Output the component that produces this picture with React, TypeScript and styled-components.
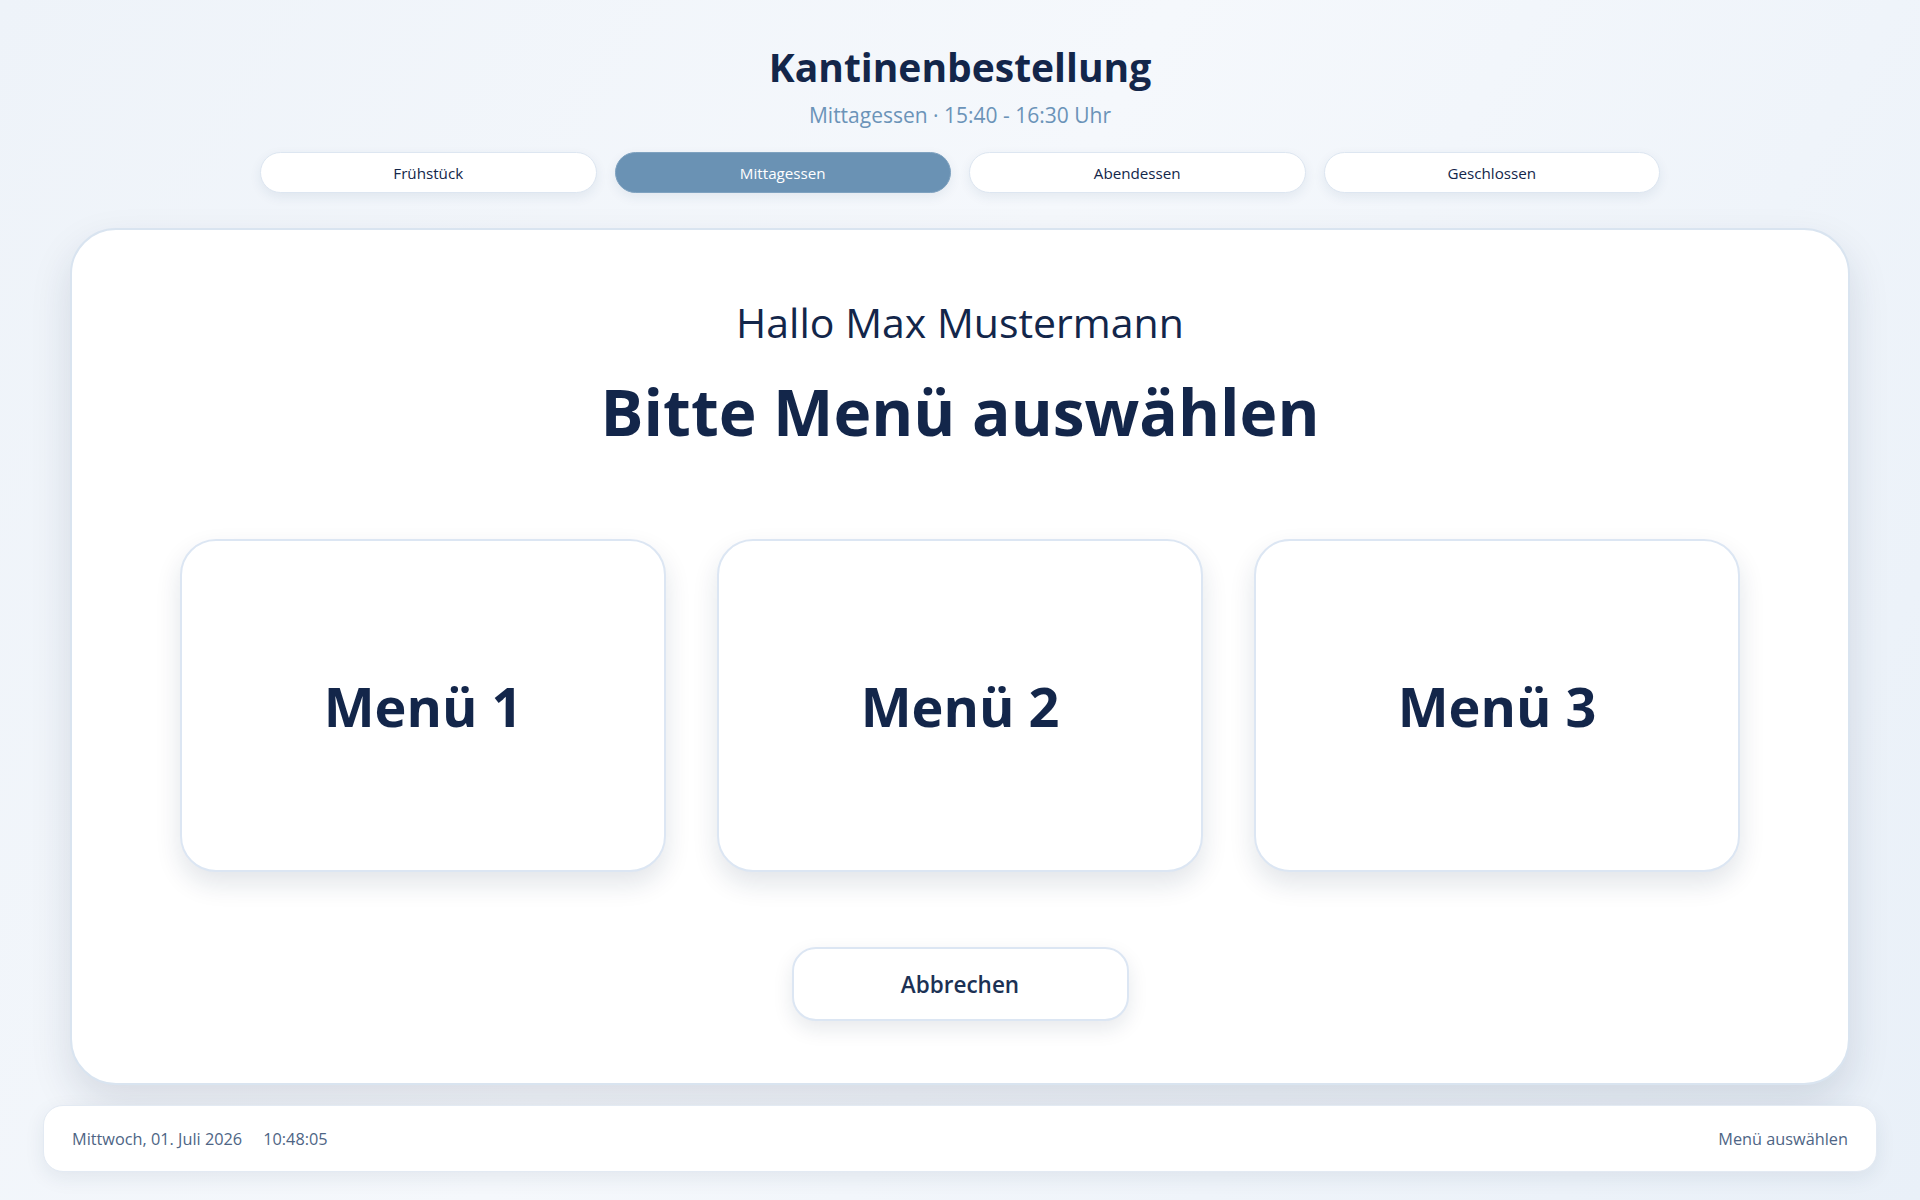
import React from 'react';
import styled, { createGlobalStyle } from 'styled-components';

const colors = {
  navy: '#13264a',
  muted: '#6b93b8',
  active: '#6a92b4',
  border: '#d9e4f0',
  footerText: '#4e6585',
};

const GlobalStyle = createGlobalStyle`
  html, body {
    margin: 0;
    padding: 0;
  }
  body {
    font-family: "Segoe UI", "Open Sans", "Noto Sans", sans-serif;
    color: ${colors.navy};
    background: linear-gradient(120deg, #eef3f9 0%, #f5f8fc 45%, #e9f0f8 100%);
    min-height: 100vh;
  }
  * {
    box-sizing: border-box;
  }
`;

const meals = ['Frühstück', 'Mittagessen', 'Abendessen', 'Geschlossen'];
const menus = ['Menü 1', 'Menü 2', 'Menü 3'];

export default function App() {
  return (
    <>
      <GlobalStyle />
      <Page>
        <Header>
          <Title>Kantinenbestellung</Title>
          <Subtitle>Mittagessen · 15:40 - 16:30 Uhr</Subtitle>
        </Header>
        <Tabs>
          {meals.map(m => (
            <Tab key={m} $active={m === 'Mittagessen'}>
              {m}
            </Tab>
          ))}
        </Tabs>
        <MainCard>
          <Greeting>Hallo Max Mustermann</Greeting>
          <Prompt>Bitte Menü auswählen</Prompt>
          <MenuGrid>
            {menus.map(m => (
              <MenuCard key={m}>{m}</MenuCard>
            ))}
          </MenuGrid>
          <CancelBtn>Abbrechen</CancelBtn>
        </MainCard>
        <Footer>
          <FooterLeft>
            <span>Mittwoch, 01. Juli 2026</span>
            <span>10:48:05</span>
          </FooterLeft>
          <FooterText>Menü auswählen</FooterText>
        </Footer>
      </Page>
    </>
  );
}

const Page = styled.div`
  display: flex;
  flex-direction: column;
  align-items: stretch;
  padding: 43px 43px 29px;
`;
const Header = styled.header`
  display: flex;
  flex-direction: column;
  align-items: center;
`;
const Title = styled.h1`
  margin: 0;
  font-size: 39px;
  line-height: 48px;
  font-weight: 700;
  color: ${colors.navy};
`;
const Subtitle = styled.div`
  margin-top: 11px;
  font-size: 21px;
  line-height: 27px;
  font-weight: 500;
  color: ${colors.muted};
`;
const Tabs = styled.nav`
  display: grid;
  grid-template-columns: repeat(4, 1fr);
  gap: 18px;
  width: 1400px;
  margin: 23px auto 0;
`;
const Tab = styled.button<{ $active?: boolean }>`
  height: 41px;
  border-radius: 999px;
  font-family: inherit;
  font-size: 15.2px;
  font-weight: 500;
  color: ${p => (p.$active ? '#ffffff' : colors.navy)};
  background: ${p => (p.$active ? colors.active : '#ffffff')};
  border: 1px solid ${p => (p.$active ? '#7fa2c0' : '#dde6f1')};
  box-shadow: 0 4px 12px rgba(30, 60, 100, 0.08);
  cursor: pointer;
`;
const MainCard = styled.main`
  display: flex;
  flex-direction: column;
  align-items: center;
  margin: 35px 27px 0;
  padding: 68px 40px 62px;
  background: #ffffff;
  border: 2px solid ${colors.border};
  border-radius: 46px;
  box-shadow: 0 18px 40px rgba(20, 40, 70, 0.13);
`;
const Greeting = styled.h2`
  margin: 0;
  font-size: 41px;
  line-height: 48px;
  font-weight: 400;
  color: ${colors.navy};
`;
const Prompt = styled.h1`
  margin: 24px 0 0;
  font-size: 64px;
  line-height: 84px;
  font-weight: 700;
  color: ${colors.navy};
`;
const MenuGrid = styled.div`
  display: grid;
  grid-template-columns: repeat(3, 1fr);
  gap: 51px;
  width: 100%;
  max-width: 1560px;
  margin-top: 85px;
`;
const MenuCard = styled.button`
  display: flex;
  align-items: center;
  justify-content: center;
  height: 333px;
  font-family: inherit;
  font-size: 54px;
  font-weight: 700;
  color: ${colors.navy};
  background: #ffffff;
  border: 2px solid #dce6f3;
  border-radius: 36px;
  box-shadow: 0 12px 26px rgba(20, 40, 70, 0.12);
  cursor: pointer;
`;
const CancelBtn = styled.button`
  width: 337px;
  height: 74px;
  margin-top: 75px;
  font-family: inherit;
  font-size: 22.5px;
  font-weight: 600;
  color: #1c3154;
  background: #ffffff;
  border: 2px solid #dce6f3;
  border-radius: 24px;
  box-shadow: 0 8px 20px rgba(20, 40, 70, 0.1);
  cursor: pointer;
`;
const Footer = styled.footer`
  display: flex;
  align-items: center;
  justify-content: space-between;
  height: 67px;
  margin-top: 20px;
  padding: 0 28px;
  background: #ffffff;
  border: 1px solid #e3eaf3;
  border-radius: 20px;
  box-shadow: 0 6px 20px rgba(30, 50, 80, 0.08);
`;
const FooterLeft = styled.div`
  display: flex;
  gap: 21px;
  font-size: 16.3px;
  color: ${colors.footerText};
`;
const FooterText = styled.div`
  font-size: 16.3px;
  color: ${colors.footerText};
`;
